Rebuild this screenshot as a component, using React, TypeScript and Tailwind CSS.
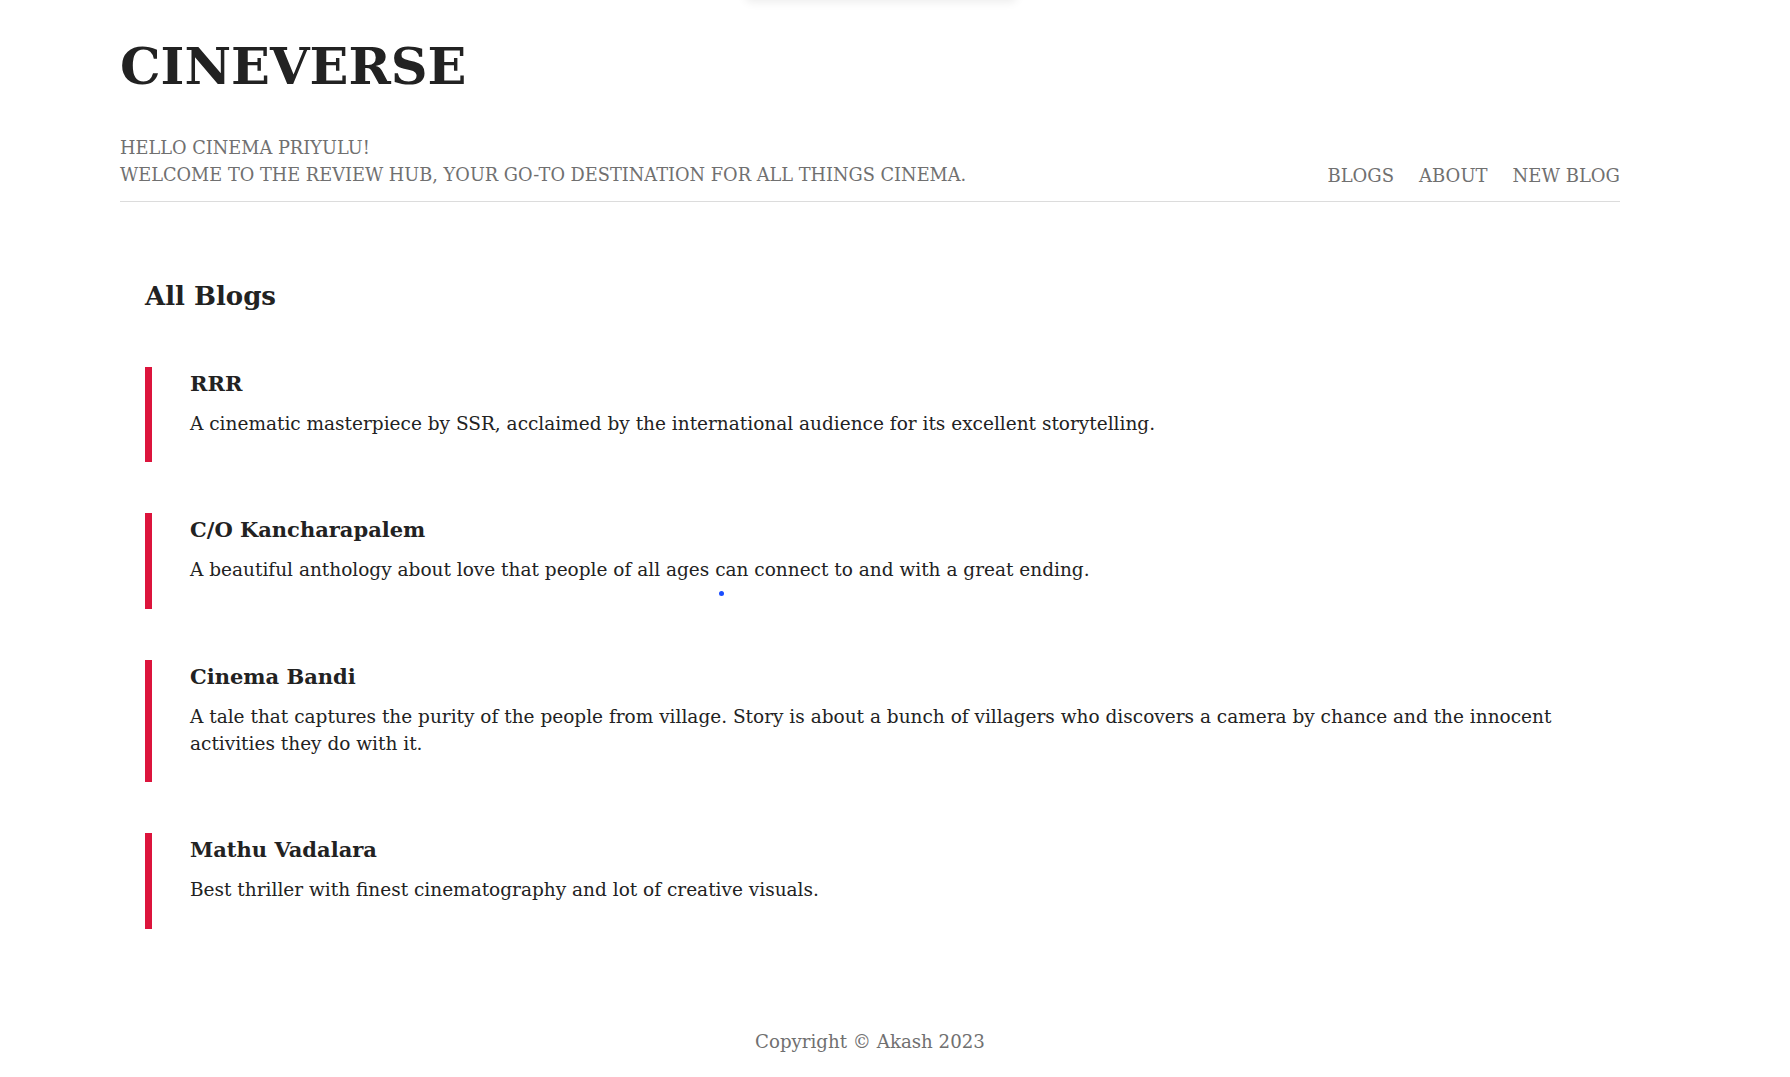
const blogs = [
  {
    title: 'RRR',
    body: 'A cinematic masterpiece by SSR, acclaimed by the international audience for its excellent storytelling.',
  },
  {
    title: 'C/O Kancharapalem',
    body: 'A beautiful anthology about love that people of all ages can connect to and with a great ending.',
  },
  {
    title: 'Cinema Bandi',
    body: 'A tale that captures the purity of the people from village. Story is about a bunch of villagers who discovers a camera by chance and the innocent activities they do with it.',
  },
  {
    title: 'Mathu Vadalara',
    body: 'Best thriller with finest cinematography and lot of creative visuals.',
  },
];

export default function App() {
  return (
    <div className="relative min-h-[1077px] bg-white font-['DejaVu_Serif',serif] text-[#222]">
      {/* popup edge peeking at the top */}
      <div className="absolute left-[745px] top-[-24px] h-[24px] w-[272px] rounded-md bg-white shadow-[0_2px_10px_rgba(0,0,0,0.08)]" />

      <div className="ml-[120px] w-[1500px]">
        {/* Header */}
        <header className="border-b border-[#dcdcdc] pt-[29px] pb-[11px]">
          <h1 className="text-[51px] font-bold leading-[74px] text-[#222]">CINEVERSE</h1>
          <div className="mt-[32px] flex items-end justify-between text-[17.75px] leading-[27.4px] text-[#707070]">
            <div>
              <p>HELLO CINEMA PRIYULU!</p>
              <p>WELCOME TO THE REVIEW HUB, YOUR GO-TO DESTINATION FOR ALL THINGS CINEMA.</p>
            </div>
            <nav className="flex gap-[25px] text-[18px]">
              <a href="#">BLOGS</a>
              <a href="#">ABOUT</a>
              <a href="#">NEW BLOG</a>
            </nav>
          </div>
        </header>

        {/* Content */}
        <main className="relative px-[25px] pt-[77px]">
          <h2 className="text-[26px] font-bold leading-[34px]">All Blogs</h2>
          <div className="mt-[54px] flex flex-col gap-[51px]">
            {blogs.map((blog) => (
              <div key={blog.title} className="border-l-[7px] border-[#dc143c] pt-[3px] pb-[25px] pl-[38px]">
                <h3 className="text-[21px] font-bold leading-[28px]">{blog.title}</h3>
                <p className="mt-[12px] text-[18.5px] leading-[27.4px] text-[#222]">{blog.body}</p>
              </div>
            ))}
          </div>
          <span className="absolute left-[599px] top-[389px] h-[5px] w-[5px] rounded-full bg-[#1a4dff]" />
        </main>

        {/* Footer */}
        <footer className="mt-[99px] text-center text-[18.2px] leading-[27.4px] text-[#707070]">
          Copyright © Akash 2023
        </footer>
      </div>
    </div>
  );
}
